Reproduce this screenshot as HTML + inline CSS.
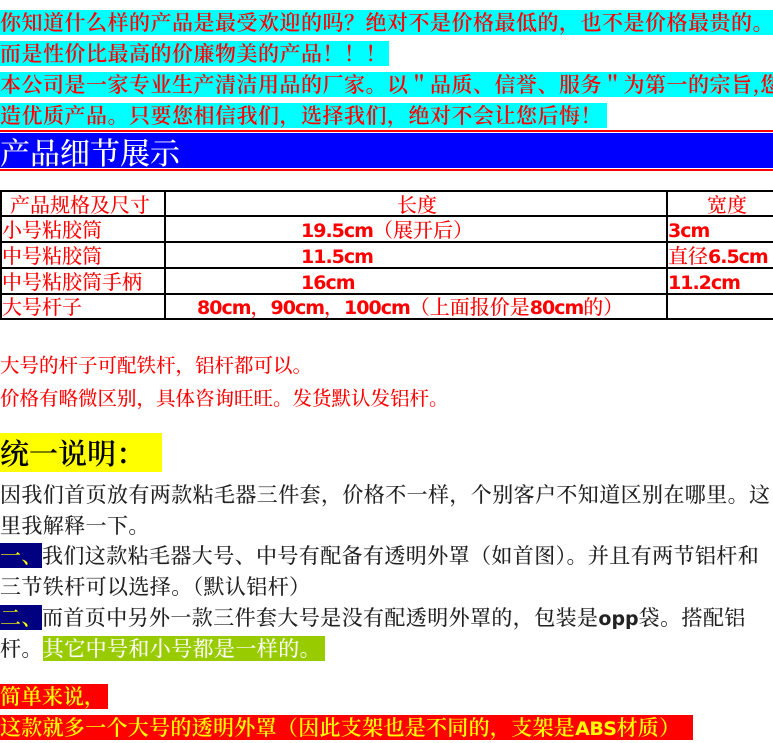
<!DOCTYPE html>
<html><head><meta charset="utf-8"><style>
html,body{margin:0;padding:0;width:773px;height:743px;overflow:hidden;background:#fff}
body{position:relative;font-family:"Noto Serif CJK SC","Liberation Serif",serif}
.a{position:absolute;white-space:nowrap}
.l{font-size:21px;line-height:25px;height:25px;color:#f00;left:0;background:#0ff;letter-spacing:0.5px;font-weight:600}
.b{font-family:"DejaVu Sans","Liberation Sans",sans-serif;font-weight:bold;letter-spacing:-1px}
.t{font-size:20px;line-height:26px;color:#f00;font-weight:500}
.k{font-size:21px;line-height:25px;color:#222;left:0;letter-spacing:0.4px;font-weight:500}
.hl{position:absolute;background:#000}
</style></head><body>
<div class="a l" style="top:10px;width:773px">你知道什么样的产品是最受欢迎的吗？绝对不是价格最低的，也不是价格最贵的。</div>
<div class="a l" style="top:41px;width:389px">而是性价比最高的价廉物美的产品！！！</div>
<div class="a l" style="top:72px;width:773px">本公司是一家专业生产清洁用品的厂家。以＂品质、信誉、服务＂为第一的宗旨,您</div>
<div class="a l" style="top:103px;width:607px">造优质产品。只要您相信我们，选择我们，绝对不会让您后悔！</div>
<div class="a" style="top:130px;left:0;width:773px;height:2px;background:#f00"></div>
<div class="a" style="top:133px;left:0;width:773px;height:35px;background:#00f;color:#fff;font-size:30px;line-height:36px;font-weight:500">产品细节展示</div>
<div class="a" style="top:169px;left:0;width:773px;height:2px;background:#f00"></div>

<div class="hl" style="top:190px;left:0;width:773px;height:2px"></div>
<div class="hl" style="top:215px;left:0;width:773px;height:2px"></div>
<div class="hl" style="top:241px;left:0;width:773px;height:2px"></div>
<div class="hl" style="top:267px;left:0;width:773px;height:2px"></div>
<div class="hl" style="top:293px;left:0;width:773px;height:2px"></div>
<div class="hl" style="top:318px;left:0;width:773px;height:2px"></div>
<div class="hl" style="top:190px;left:0;width:2px;height:130px"></div>
<div class="hl" style="top:190px;left:164px;width:2px;height:130px"></div>
<div class="hl" style="top:190px;left:666px;width:2px;height:130px"></div>

<div class="a t" style="top:191px;left:10px">产品规格及尺寸</div>
<div class="a t" style="top:191px;left:397px">长度</div>
<div class="a t" style="top:191px;left:707px">宽度</div>
<div class="a t" style="top:216px;left:2px">小号粘胶筒</div>
<div class="a t" style="top:216px;left:301px"><span class="b" style="font-size:19px">19.5cm</span>（展开后）</div>
<div class="a t" style="top:216px;left:668px"><span class="b" style="font-size:19px">3cm</span></div>
<div class="a t" style="top:242px;left:2px">中号粘胶筒</div>
<div class="a t" style="top:242px;left:301px"><span class="b" style="font-size:19px">11.5cm</span></div>
<div class="a t" style="top:242px;left:668px">直径<span class="b" style="font-size:19px">6.5cm</span></div>
<div class="a t" style="top:268px;left:2px">中号粘胶筒手柄</div>
<div class="a t" style="top:268px;left:301px"><span class="b" style="font-size:19px">16cm</span></div>
<div class="a t" style="top:268px;left:668px"><span class="b" style="font-size:19px">11.2cm</span></div>
<div class="a t" style="top:293px;left:2px">大号杆子</div>
<div class="a t" style="top:293px;left:197px"><span class="b" style="font-size:19px">80cm</span>，<span class="b" style="font-size:19px">90cm</span>，<span class="b" style="font-size:19px">100cm</span>（上面报价是<span class="b" style="font-size:19px">80cm</span>的）</div>

<div class="a" style="top:352px;left:0;font-size:19.5px;line-height:24px;color:#f00;font-weight:500">大号的杆子可配铁杆，铝杆都可以。</div>
<div class="a" style="top:385px;left:0;font-size:19.5px;line-height:24px;color:#f00;font-weight:500">价格有略微区别，具体咨询旺旺。发货默认发铝杆。</div>

<div class="a" style="top:433px;left:0;width:162px;height:39px;background:#ff0;font-size:29px;line-height:40px;color:#000;font-weight:600">统一说明：</div>
<div class="a k" style="top:482px">因我们首页放有两款粘毛器三件套，价格不一样，个别客户不知道区别在哪里。这</div>
<div class="a k" style="top:513px">里我解释一下。</div>
<div class="a k" style="top:543px"><span style="background:#000080;color:#ff0;display:inline-block;width:42px">一、</span>我们这款粘毛器大号、中号有配备有透明外罩（如首图）。并且有两节铝杆和</div>
<div class="a k" style="top:574px">三节铁杆可以选择。（默认铝杆）</div>
<div class="a k" style="top:605px"><span style="background:#000080;color:#ff0;display:inline-block;width:42px">二、</span>而首页中另外一款三件套大号是没有配透明外罩的，包装是<span class="b" style="font-size:19px;letter-spacing:0">opp</span>袋。搭配铝</div>
<div class="a k" style="top:636px">杆。<span style="background:#99cc00;color:#fff;display:inline-block;width:282px">其它中号和小号都是一样的。</span></div>

<div class="a" style="top:684px;left:0;width:108px;height:25px;background:#f00;color:#ff0;font-size:21px;line-height:25px;font-weight:600">简单来说，</div>
<div class="a" style="top:715px;left:0;width:693px;height:25px;background:#f00;color:#ff0;font-size:21px;line-height:25px;letter-spacing:0.3px;font-weight:600">这款就多一个大号的透明外罩（因此支架也是不同的，支架是<span class="b" style="font-size:19px;letter-spacing:-0.5px">ABS</span>材质）</div>
</body></html>
